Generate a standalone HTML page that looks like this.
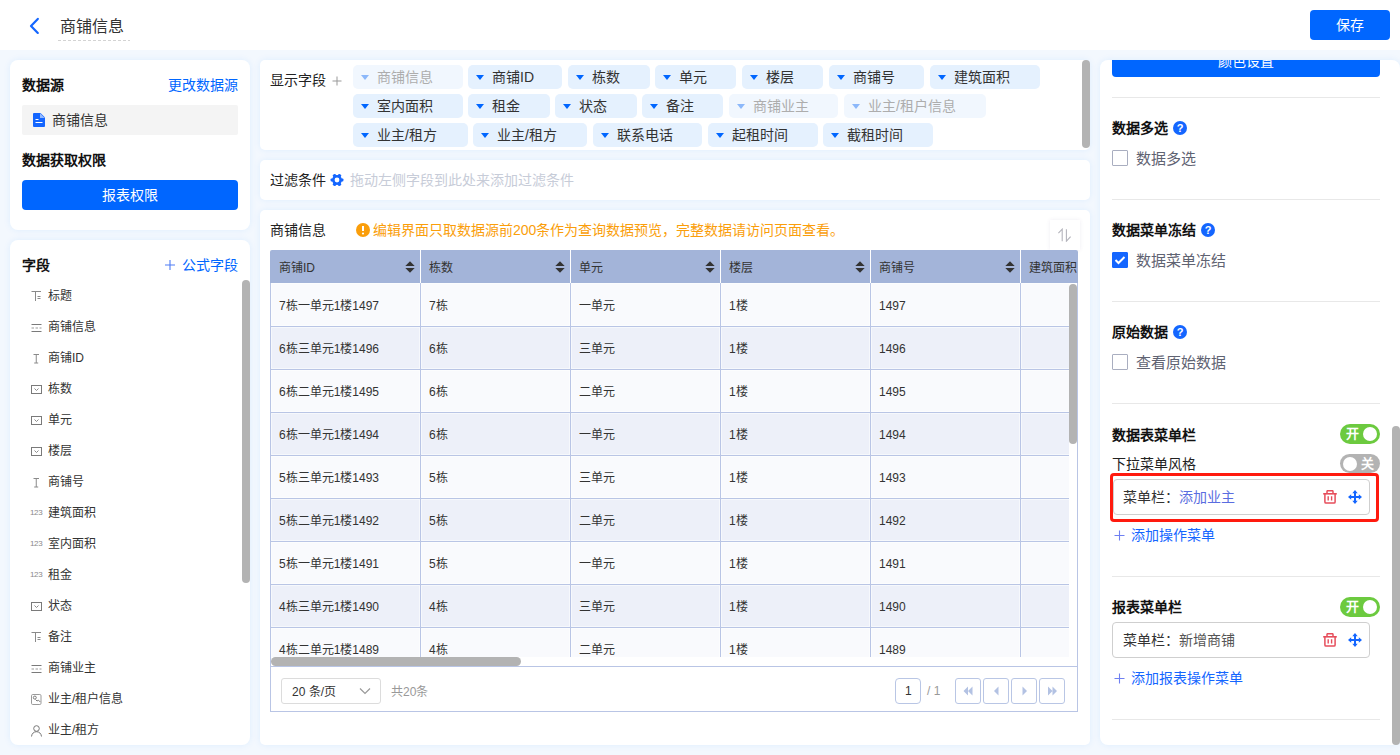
<!DOCTYPE html>
<html lang="zh-CN"><head><meta charset="utf-8"><title>商铺信息</title>
<style>
*{box-sizing:border-box;margin:0;padding:0}
html,body{width:1400px;height:755px;overflow:hidden}
body{position:relative;background:#f3f8fe;font-family:"Liberation Sans",sans-serif;color:#333;font-size:14px;line-height:1}
.a{position:absolute}
.hdr{left:0;top:0;width:1400px;height:50px;background:#fff}
.panel{background:#fff;box-shadow:0 0 7px rgba(0,130,250,0.09)}
.bold{font-weight:bold;color:#111}
.blue{color:#0066ff}
.txt{white-space:nowrap}
.tag{height:24px;border-radius:5px;background:#e5f1fe;color:#333;font-size:14px;line-height:24px;white-space:nowrap}
.tag.dis{background:#f1f7fe;color:#adadad}
.tag i{position:absolute;left:8px;top:9.5px;width:0;height:0;border-left:4px solid transparent;border-right:4px solid transparent;border-top:5px solid #0066ff}
.tag.dis i{border-top-color:#8cb8fa}
.tag span{position:absolute;left:24px;top:0}
.fld{left:30px;width:200px;height:14px;font-size:12px;color:#333;white-space:nowrap}
.fld svg{position:absolute;left:0;top:0}
.fld span{position:absolute;left:18px;top:0px}
.th{top:0;height:33px;color:#333;font-size:12px}
.th span{position:absolute;left:9px;top:12px}
.sort{position:absolute;left:135px;top:10.5px;width:10px;height:12px}
.td{font-size:12px;color:#333;height:42px;box-shadow:inset 0 0 0 1px rgba(255,255,255,0.5)}
.td span{position:absolute;left:8px;top:16px;white-space:nowrap}
.div{height:1px;background:#e8e8e8;left:1112px;width:268px}
.cb{width:16px;height:16px;border:1px solid #a9aec0;border-radius:1px;background:#fff}
.q{width:14px;height:14px;border-radius:7px;background:#1466ff;color:#fff;font-size:11px;font-weight:bold;text-align:center;line-height:14px}
.tog{width:40px;height:20px;border-radius:10px;color:#fff;font-size:13px;font-weight:bold}
.card{border:1px solid #cfcfcf;border-radius:4px;background:#fff}
.pbtn{width:26px;height:26px;border:1px solid #b9c6e5;border-radius:3px;background:#fff}
</style></head><body>
<div class="a hdr"></div>
<svg class="a" style="left:27px;top:16px" width="14" height="19" viewBox="0 0 14 19"><path d="M10.8 2.9L4 9.9L10.8 16.9" stroke="#1466ff" stroke-width="2.2" fill="none" stroke-linecap="round" stroke-linejoin="round"/></svg>
<div class="a txt" style="left:60px;top:19px;font-size:16px;color:#333">商铺信息</div>
<div class="a" style="left:58px;top:40px;width:72px;height:1px;background:repeating-linear-gradient(90deg,#d3d3d3 0 3px,transparent 3px 5px)"></div>
<div class="a" style="left:1310px;top:10px;width:80px;height:30px;border-radius:4px;background:#0066ff;color:#fff;font-size:14px;text-align:center;line-height:30px">保存</div>

<div class="a panel" style="left:10px;top:60px;width:240px;height:170px;border-radius:8px"></div>
<div class="a txt bold" style="left:22px;top:78px">数据源</div>
<div class="a txt blue" style="left:168px;top:78px">更改数据源</div>
<div class="a" style="left:22px;top:105px;width:216px;height:30px;background:#f4f4f4;border-radius:2px"></div>
<svg class="a" style="left:33px;top:113px" width="12" height="14" viewBox="0 0 12 14"><path d="M0 1a1 1 0 0 1 1-1h6.5l4.5 4.5v8.5a1 1 0 0 1-1 1H1a1 1 0 0 1-1-1z" fill="#1466ff"/><path d="M7 0.3v4.7h4.7z" fill="#fff" opacity="0.55"/><path d="M2.5 6.5h3M2.5 9.5h7" stroke="#fff" stroke-width="1.2"/></svg>
<div class="a txt" style="left:52px;top:113px;color:#333">商铺信息</div>
<div class="a txt bold" style="left:22px;top:153px">数据获取权限</div>
<div class="a" style="left:22px;top:180px;width:216px;height:30px;border-radius:4px;background:#0066ff;color:#fff;text-align:center;line-height:30px">报表权限</div>

<div class="a panel" style="left:10px;top:240px;width:240px;height:505px;border-radius:8px"></div>
<div class="a txt bold" style="left:22px;top:258px">字段</div>
<svg class="a" style="left:164px;top:259px" width="12" height="12" viewBox="0 0 12 12"><path d="M6 1v10M1 6h10" stroke="#4f7cf5" stroke-width="1.1"/></svg>
<div class="a txt blue" style="left:182px;top:258px">公式字段</div>
<div class="a" style="left:242px;top:280px;width:8px;height:303px;border-radius:4px;background:#b3b3b3"></div>

<div class="a fld" style="top:290px"><svg width="14" height="14" viewBox="0 0 14 14"><path d="M1.5 1.5h9.5M5.5 1.5v9.5M7.5 6.5h3M7.5 8.5h3" stroke="#8a8a8a" stroke-width="1" fill="none"/></svg><span>标题</span></div>
<div class="a fld" style="top:321px"><svg width="14" height="14" viewBox="0 0 14 14"><path d="M1.5 3.5h10M1.5 10.5h10" stroke="#7a7a7a" stroke-width="1" fill="none"/><path d="M1.5 7h10" stroke="#9a9a9a" stroke-width="1" stroke-dasharray="2.5 1.5" fill="none"/></svg><span>商铺信息</span></div>
<div class="a fld" style="top:352px"><svg width="14" height="14" viewBox="0 0 14 14"><path d="M3.5 2.5h5.5M6.25 2.5v8.5M4.2 11h4" stroke="#8a8a8a" stroke-width="1" fill="none"/></svg><span>商铺ID</span></div>
<div class="a fld" style="top:383px"><svg width="14" height="14" viewBox="0 0 14 14"><rect x="1.5" y="2.5" width="10" height="8" stroke="#7a7a7a" stroke-width="1" fill="none"/><path d="M4.5 5.5l2 2 2-2" stroke="#8a8a8a" stroke-width="1" fill="none"/></svg><span>栋数</span></div>
<div class="a fld" style="top:414px"><svg width="14" height="14" viewBox="0 0 14 14"><rect x="1.5" y="2.5" width="10" height="8" stroke="#7a7a7a" stroke-width="1" fill="none"/><path d="M4.5 5.5l2 2 2-2" stroke="#8a8a8a" stroke-width="1" fill="none"/></svg><span>单元</span></div>
<div class="a fld" style="top:445px"><svg width="14" height="14" viewBox="0 0 14 14"><rect x="1.5" y="2.5" width="10" height="8" stroke="#7a7a7a" stroke-width="1" fill="none"/><path d="M4.5 5.5l2 2 2-2" stroke="#8a8a8a" stroke-width="1" fill="none"/></svg><span>楼层</span></div>
<div class="a fld" style="top:476px"><svg width="14" height="14" viewBox="0 0 14 14"><path d="M3.5 2.5h5.5M6.25 2.5v8.5M4.2 11h4" stroke="#8a8a8a" stroke-width="1" fill="none"/></svg><span>商铺号</span></div>
<div class="a fld" style="top:507px"><svg width="14" height="14" viewBox="0 0 14 14"><text x="0" y="7.6" font-size="8" font-family="Liberation Sans" fill="#8a8a8a" letter-spacing="-0.35">123</text></svg><span>建筑面积</span></div>
<div class="a fld" style="top:538px"><svg width="14" height="14" viewBox="0 0 14 14"><text x="0" y="7.6" font-size="8" font-family="Liberation Sans" fill="#8a8a8a" letter-spacing="-0.35">123</text></svg><span>室内面积</span></div>
<div class="a fld" style="top:569px"><svg width="14" height="14" viewBox="0 0 14 14"><text x="0" y="7.6" font-size="8" font-family="Liberation Sans" fill="#8a8a8a" letter-spacing="-0.35">123</text></svg><span>租金</span></div>
<div class="a fld" style="top:600px"><svg width="14" height="14" viewBox="0 0 14 14"><rect x="1.5" y="2.5" width="10" height="8" stroke="#7a7a7a" stroke-width="1" fill="none"/><path d="M4.5 5.5l2 2 2-2" stroke="#8a8a8a" stroke-width="1" fill="none"/></svg><span>状态</span></div>
<div class="a fld" style="top:631px"><svg width="14" height="14" viewBox="0 0 14 14"><path d="M1.5 1.5h9.5M5.5 1.5v9.5M7.5 6.5h3M7.5 8.5h3" stroke="#8a8a8a" stroke-width="1" fill="none"/></svg><span>备注</span></div>
<div class="a fld" style="top:662px"><svg width="14" height="14" viewBox="0 0 14 14"><path d="M1.5 3.5h10M1.5 10.5h10" stroke="#7a7a7a" stroke-width="1" fill="none"/><path d="M1.5 7h10" stroke="#9a9a9a" stroke-width="1" stroke-dasharray="2.5 1.5" fill="none"/></svg><span>商铺业主</span></div>
<div class="a fld" style="top:693px"><svg width="14" height="14" viewBox="0 0 14 14"><rect x="1.5" y="1.5" width="9.5" height="10" rx="1.2" stroke="#9a9a9a" stroke-width="1" fill="none"/><circle cx="4.8" cy="4.6" r="1.5" stroke="#7a7a7a" fill="none"/><path d="M5.5 6.5l1.5 1.5 1.5-0.8 1.8 1.8" stroke="#7a7a7a" fill="none"/></svg><span>业主/租户信息</span></div>
<div class="a fld" style="top:724px"><svg width="14" height="14" viewBox="0 0 14 14"><circle cx="6.5" cy="4.5" r="2.8" stroke="#777" stroke-width="1" fill="none"/><path d="M1.5 12.5c0.3-3 2.3-4.8 5-4.8s4.7 1.8 5 4.8" stroke="#777" stroke-width="1" fill="none"/></svg><span>业主/租方</span></div>
<div class="a panel" style="left:260px;top:60px;width:830px;height:90px;border-radius:5px"></div>
<div class="a txt" style="left:270px;top:73px;color:#222">显示字段</div>
<svg class="a" style="left:332px;top:76px" width="10" height="10" viewBox="0 0 10 10"><path d="M5 0.5v9M0.5 5h9" stroke="#999" stroke-width="1"/></svg>
<div class="a" style="left:1082px;top:60px;width:8px;height:88px;border-radius:4px;background:#b3b3b3"></div>

<div class="a tag dis" style="left:353px;top:65px;width:110px"><i></i><span>商铺信息</span></div>
<div class="a tag" style="left:468px;top:65px;width:94px"><i></i><span>商铺ID</span></div>
<div class="a tag" style="left:568px;top:65px;width:82px"><i></i><span>栋数</span></div>
<div class="a tag" style="left:655px;top:65px;width:81px"><i></i><span>单元</span></div>
<div class="a tag" style="left:742px;top:65px;width:81px"><i></i><span>楼层</span></div>
<div class="a tag" style="left:829px;top:65px;width:95px"><i></i><span>商铺号</span></div>
<div class="a tag" style="left:930px;top:65px;width:110px"><i></i><span>建筑面积</span></div>
<div class="a tag" style="left:353px;top:94px;width:110px"><i></i><span>室内面积</span></div>
<div class="a tag" style="left:468px;top:94px;width:82px"><i></i><span>租金</span></div>
<div class="a tag" style="left:555px;top:94px;width:82px"><i></i><span>状态</span></div>
<div class="a tag" style="left:642px;top:94px;width:81px"><i></i><span>备注</span></div>
<div class="a tag dis" style="left:729px;top:94px;width:109px"><i></i><span>商铺业主</span></div>
<div class="a tag dis" style="left:844px;top:94px;width:142px"><i></i><span>业主/租户信息</span></div>
<div class="a tag" style="left:353px;top:123px;width:115px"><i></i><span>业主/租方</span></div>
<div class="a tag" style="left:473px;top:123px;width:114px"><i></i><span>业主/租方</span></div>
<div class="a tag" style="left:593px;top:123px;width:109px"><i></i><span>联系电话</span></div>
<div class="a tag" style="left:708px;top:123px;width:110px"><i></i><span>起租时间</span></div>
<div class="a tag" style="left:823px;top:123px;width:110px"><i></i><span>截租时间</span></div>
<div class="a panel" style="left:260px;top:160px;width:830px;height:40px;border-radius:5px"></div>
<div class="a txt" style="left:270px;top:173px;color:#222">过滤条件</div>
<svg class="a" style="left:330px;top:173.3px" width="14" height="14" viewBox="0 0 14 14"><g fill="#1466ff"><circle cx="7" cy="7" r="4.9"/><rect x="0.6" y="5.4" width="12.8" height="3.2" rx="0.8"/><rect x="0.6" y="5.4" width="12.8" height="3.2" rx="0.8" transform="rotate(60 7 7)"/><rect x="0.6" y="5.4" width="12.8" height="3.2" rx="0.8" transform="rotate(120 7 7)"/></g><circle cx="7" cy="7" r="2.4" fill="#fff"/></svg>
<div class="a txt" style="left:350px;top:173px;color:#c7ccd8">拖动左侧字段到此处来添加过滤条件</div>

<div class="a panel" style="left:260px;top:210px;width:830px;height:535px;border-radius:5px"></div>
<div class="a txt" style="left:270px;top:223px;color:#222">商铺信息</div>
<svg class="a" style="left:356px;top:223px" width="14" height="14" viewBox="0 0 14 14"><circle cx="7" cy="7" r="7" fill="#fa9e0b"/><path d="M7 3v5" stroke="#fff" stroke-width="2"/><circle cx="7" cy="10.5" r="1.1" fill="#fff"/></svg>
<div class="a txt" style="left:373px;top:223px;color:#fa9e0b">编辑界面只取数据源前200条作为查询数据预览，完整数据请访问页面查看。</div>
<div class="a" style="left:1050px;top:220px;width:30px;height:30px;background:#fff;box-shadow:0 0 4px rgba(80,60,120,0.09)"></div>
<svg class="a" style="left:1058px;top:228px" width="14" height="14" viewBox="0 0 14 14"><path d="M4.2 13.2V1.2L0.4 5.2M8.4 1.2v12l4.2-4.6" stroke="#b4b4bc" stroke-width="1.1" fill="none"/></svg>

<div class="a" style="left:270px;top:250px;width:808px;height:33px;background:#a3b4d9;border-radius:2px 2px 0 0"></div>
<div class="a" style="left:270px;top:250px;width:808px;height:33px;overflow:hidden">
<div class="a th" style="left:0px;width:150px"><span>商铺ID</span><svg class="sort" viewBox="0 0 10 12"><path d="M0.3 5L5 0.3L9.7 5Z M0.3 7L5 11.7L9.7 7Z" fill="#333"/></svg></div>
<div class="a th" style="left:150px;width:150px"><span>栋数</span><svg class="sort" viewBox="0 0 10 12"><path d="M0.3 5L5 0.3L9.7 5Z M0.3 7L5 11.7L9.7 7Z" fill="#333"/></svg></div>
<div class="a" style="left:150px;top:0;width:1px;height:33px;background:#fff"></div>
<div class="a th" style="left:300px;width:150px"><span>单元</span><svg class="sort" viewBox="0 0 10 12"><path d="M0.3 5L5 0.3L9.7 5Z M0.3 7L5 11.7L9.7 7Z" fill="#333"/></svg></div>
<div class="a" style="left:300px;top:0;width:1px;height:33px;background:#fff"></div>
<div class="a th" style="left:450px;width:150px"><span>楼层</span><svg class="sort" viewBox="0 0 10 12"><path d="M0.3 5L5 0.3L9.7 5Z M0.3 7L5 11.7L9.7 7Z" fill="#333"/></svg></div>
<div class="a" style="left:450px;top:0;width:1px;height:33px;background:#fff"></div>
<div class="a th" style="left:600px;width:150px"><span>商铺号</span><svg class="sort" viewBox="0 0 10 12"><path d="M0.3 5L5 0.3L9.7 5Z M0.3 7L5 11.7L9.7 7Z" fill="#333"/></svg></div>
<div class="a" style="left:600px;top:0;width:1px;height:33px;background:#fff"></div>
<div class="a th" style="left:750px;width:150px"><span>建筑面积</span></div>
<div class="a" style="left:750px;top:0;width:1px;height:33px;background:#fff"></div>
</div>
<div class="a" style="left:271px;top:283px;width:798px;height:374px;overflow:hidden;background:#fff">
<div class="a td" style="left:0px;top:0px;width:149px;height:43px;background:#f9fafd"><span style="top:17px">7栋一单元1楼1497</span></div>
<div class="a td" style="left:150px;top:0px;width:149px;height:43px;background:#f9fafd"><span style="top:17px">7栋</span></div>
<div class="a td" style="left:300px;top:0px;width:149px;height:43px;background:#f9fafd"><span style="top:17px">一单元</span></div>
<div class="a td" style="left:450px;top:0px;width:149px;height:43px;background:#f9fafd"><span style="top:17px">1楼</span></div>
<div class="a td" style="left:600px;top:0px;width:149px;height:43px;background:#f9fafd"><span style="top:17px">1497</span></div>
<div class="a td" style="left:750px;top:0px;width:149px;height:43px;background:#f9fafd"><span style="top:17px"></span></div>
<div class="a" style="left:0;top:43px;width:798px;height:1px;background:#b9c5e5"></div>
<div class="a td" style="left:0px;top:44px;width:149px;height:42px;background:#edf0f9"><span style="top:16px">6栋三单元1楼1496</span></div>
<div class="a td" style="left:150px;top:44px;width:149px;height:42px;background:#edf0f9"><span style="top:16px">6栋</span></div>
<div class="a td" style="left:300px;top:44px;width:149px;height:42px;background:#edf0f9"><span style="top:16px">三单元</span></div>
<div class="a td" style="left:450px;top:44px;width:149px;height:42px;background:#edf0f9"><span style="top:16px">1楼</span></div>
<div class="a td" style="left:600px;top:44px;width:149px;height:42px;background:#edf0f9"><span style="top:16px">1496</span></div>
<div class="a td" style="left:750px;top:44px;width:149px;height:42px;background:#edf0f9"><span style="top:16px"></span></div>
<div class="a" style="left:0;top:86px;width:798px;height:1px;background:#b9c5e5"></div>
<div class="a td" style="left:0px;top:87px;width:149px;height:42px;background:#f9fafd"><span style="top:16px">6栋二单元1楼1495</span></div>
<div class="a td" style="left:150px;top:87px;width:149px;height:42px;background:#f9fafd"><span style="top:16px">6栋</span></div>
<div class="a td" style="left:300px;top:87px;width:149px;height:42px;background:#f9fafd"><span style="top:16px">二单元</span></div>
<div class="a td" style="left:450px;top:87px;width:149px;height:42px;background:#f9fafd"><span style="top:16px">1楼</span></div>
<div class="a td" style="left:600px;top:87px;width:149px;height:42px;background:#f9fafd"><span style="top:16px">1495</span></div>
<div class="a td" style="left:750px;top:87px;width:149px;height:42px;background:#f9fafd"><span style="top:16px"></span></div>
<div class="a" style="left:0;top:129px;width:798px;height:1px;background:#b9c5e5"></div>
<div class="a td" style="left:0px;top:130px;width:149px;height:42px;background:#edf0f9"><span style="top:16px">6栋一单元1楼1494</span></div>
<div class="a td" style="left:150px;top:130px;width:149px;height:42px;background:#edf0f9"><span style="top:16px">6栋</span></div>
<div class="a td" style="left:300px;top:130px;width:149px;height:42px;background:#edf0f9"><span style="top:16px">一单元</span></div>
<div class="a td" style="left:450px;top:130px;width:149px;height:42px;background:#edf0f9"><span style="top:16px">1楼</span></div>
<div class="a td" style="left:600px;top:130px;width:149px;height:42px;background:#edf0f9"><span style="top:16px">1494</span></div>
<div class="a td" style="left:750px;top:130px;width:149px;height:42px;background:#edf0f9"><span style="top:16px"></span></div>
<div class="a" style="left:0;top:172px;width:798px;height:1px;background:#b9c5e5"></div>
<div class="a td" style="left:0px;top:173px;width:149px;height:42px;background:#f9fafd"><span style="top:16px">5栋三单元1楼1493</span></div>
<div class="a td" style="left:150px;top:173px;width:149px;height:42px;background:#f9fafd"><span style="top:16px">5栋</span></div>
<div class="a td" style="left:300px;top:173px;width:149px;height:42px;background:#f9fafd"><span style="top:16px">三单元</span></div>
<div class="a td" style="left:450px;top:173px;width:149px;height:42px;background:#f9fafd"><span style="top:16px">1楼</span></div>
<div class="a td" style="left:600px;top:173px;width:149px;height:42px;background:#f9fafd"><span style="top:16px">1493</span></div>
<div class="a td" style="left:750px;top:173px;width:149px;height:42px;background:#f9fafd"><span style="top:16px"></span></div>
<div class="a" style="left:0;top:215px;width:798px;height:1px;background:#b9c5e5"></div>
<div class="a td" style="left:0px;top:216px;width:149px;height:42px;background:#edf0f9"><span style="top:16px">5栋二单元1楼1492</span></div>
<div class="a td" style="left:150px;top:216px;width:149px;height:42px;background:#edf0f9"><span style="top:16px">5栋</span></div>
<div class="a td" style="left:300px;top:216px;width:149px;height:42px;background:#edf0f9"><span style="top:16px">二单元</span></div>
<div class="a td" style="left:450px;top:216px;width:149px;height:42px;background:#edf0f9"><span style="top:16px">1楼</span></div>
<div class="a td" style="left:600px;top:216px;width:149px;height:42px;background:#edf0f9"><span style="top:16px">1492</span></div>
<div class="a td" style="left:750px;top:216px;width:149px;height:42px;background:#edf0f9"><span style="top:16px"></span></div>
<div class="a" style="left:0;top:258px;width:798px;height:1px;background:#b9c5e5"></div>
<div class="a td" style="left:0px;top:259px;width:149px;height:42px;background:#f9fafd"><span style="top:16px">5栋一单元1楼1491</span></div>
<div class="a td" style="left:150px;top:259px;width:149px;height:42px;background:#f9fafd"><span style="top:16px">5栋</span></div>
<div class="a td" style="left:300px;top:259px;width:149px;height:42px;background:#f9fafd"><span style="top:16px">一单元</span></div>
<div class="a td" style="left:450px;top:259px;width:149px;height:42px;background:#f9fafd"><span style="top:16px">1楼</span></div>
<div class="a td" style="left:600px;top:259px;width:149px;height:42px;background:#f9fafd"><span style="top:16px">1491</span></div>
<div class="a td" style="left:750px;top:259px;width:149px;height:42px;background:#f9fafd"><span style="top:16px"></span></div>
<div class="a" style="left:0;top:301px;width:798px;height:1px;background:#b9c5e5"></div>
<div class="a td" style="left:0px;top:302px;width:149px;height:42px;background:#edf0f9"><span style="top:16px">4栋三单元1楼1490</span></div>
<div class="a td" style="left:150px;top:302px;width:149px;height:42px;background:#edf0f9"><span style="top:16px">4栋</span></div>
<div class="a td" style="left:300px;top:302px;width:149px;height:42px;background:#edf0f9"><span style="top:16px">三单元</span></div>
<div class="a td" style="left:450px;top:302px;width:149px;height:42px;background:#edf0f9"><span style="top:16px">1楼</span></div>
<div class="a td" style="left:600px;top:302px;width:149px;height:42px;background:#edf0f9"><span style="top:16px">1490</span></div>
<div class="a td" style="left:750px;top:302px;width:149px;height:42px;background:#edf0f9"><span style="top:16px"></span></div>
<div class="a" style="left:0;top:344px;width:798px;height:1px;background:#b9c5e5"></div>
<div class="a td" style="left:0px;top:345px;width:149px;height:42px;background:#f9fafd"><span style="top:16px">4栋二单元1楼1489</span></div>
<div class="a td" style="left:150px;top:345px;width:149px;height:42px;background:#f9fafd"><span style="top:16px">4栋</span></div>
<div class="a td" style="left:300px;top:345px;width:149px;height:42px;background:#f9fafd"><span style="top:16px">二单元</span></div>
<div class="a td" style="left:450px;top:345px;width:149px;height:42px;background:#f9fafd"><span style="top:16px">1楼</span></div>
<div class="a td" style="left:600px;top:345px;width:149px;height:42px;background:#f9fafd"><span style="top:16px">1489</span></div>
<div class="a td" style="left:750px;top:345px;width:149px;height:42px;background:#f9fafd"><span style="top:16px"></span></div>
<div class="a" style="left:0;top:387px;width:798px;height:1px;background:#b9c5e5"></div>
<div class="a" style="left:149px;top:0;width:1px;height:374px;background:#b9c5e5"></div>
<div class="a" style="left:299px;top:0;width:1px;height:374px;background:#b9c5e5"></div>
<div class="a" style="left:449px;top:0;width:1px;height:374px;background:#b9c5e5"></div>
<div class="a" style="left:599px;top:0;width:1px;height:374px;background:#b9c5e5"></div>
<div class="a" style="left:749px;top:0;width:1px;height:374px;background:#b9c5e5"></div>
</div>
<div class="a" style="left:270px;top:283px;width:1px;height:429px;background:#b9c5e5"></div>
<div class="a" style="left:1077px;top:283px;width:1px;height:429px;background:#b9c5e5"></div>
<div class="a" style="left:270px;top:711px;width:808px;height:1px;background:#b9c5e5"></div>
<div class="a" style="left:270px;top:666px;width:808px;height:1px;background:#b9c5e5"></div>
<div class="a" style="left:1069px;top:284px;width:8px;height:160px;border-radius:4px;background:#b3b3b3"></div>
<div class="a" style="left:271px;top:657px;width:250px;height:9px;border-radius:4.5px;background:#b3b3b3"></div>
<div class="a" style="left:281px;top:678px;width:100px;height:26px;border:1px solid #dcdcdc;border-radius:3px"></div>
<div class="a txt" style="left:292px;top:686px;font-size:12px;color:#333">20 条/页</div>
<svg class="a" style="left:359px;top:687px" width="12" height="8" viewBox="0 0 12 8"><path d="M1 1.5L6 6.5L11 1.5" stroke="#999" stroke-width="1.2" fill="none"/></svg>
<div class="a txt" style="left:391px;top:686px;font-size:12px;color:#999">共20条</div>
<div class="a pbtn" style="left:895px;top:678px;border-radius:4px"></div>
<div class="a txt" style="left:905px;top:685px;font-size:12px;color:#333">1</div>
<div class="a txt" style="left:927px;top:685px;font-size:12px;color:#999">/ 1</div>
<div class="a pbtn" style="left:955px;top:678px"><svg class="a" style="left:6px;top:7px" width="12" height="10" viewBox="0 0 12 10"><path d="M6 0.5L1.5 5L6 9.5Z M10.5 0.5L6 5L10.5 9.5Z" fill="#b3c2e3"/></svg></div>
<div class="a pbtn" style="left:983px;top:678px"><svg class="a" style="left:9px;top:7px" width="6" height="10" viewBox="0 0 6 10"><path d="M5.5 0.5L1 5L5.5 9.5Z" fill="#b3c2e3"/></svg></div>
<div class="a pbtn" style="left:1011px;top:678px"><svg class="a" style="left:10px;top:7px" width="6" height="10" viewBox="0 0 6 10"><path d="M0.5 0.5L5 5L0.5 9.5Z" fill="#b3c2e3"/></svg></div>
<div class="a pbtn" style="left:1039px;top:678px"><svg class="a" style="left:7px;top:7px" width="12" height="10" viewBox="0 0 12 10"><path d="M1 0.5L5.5 5L1 9.5Z M5.5 0.5L10 5L5.5 9.5Z" fill="#b3c2e3"/></svg></div>

<div class="a panel" style="left:1100px;top:60px;width:300px;height:685px;border-radius:8px;overflow:hidden">
<div class="a" style="left:12px;top:-20px;width:268px;height:37px;border-radius:4px;background:#0066ff;color:#fff;text-align:center;line-height:42px">颜色设置</div>
</div>
<div class="a div" style="top:97px"></div>
<div class="a div" style="top:199px"></div>
<div class="a div" style="top:301px"></div>
<div class="a div" style="top:403px"></div>
<div class="a div" style="top:576px"></div>
<div class="a div" style="top:719px"></div>
<div class="a" style="left:1392px;top:426px;width:8px;height:319px;border-radius:4px;background:#b3b3b3"></div>

<div class="a txt bold" style="left:1112px;top:121px">数据多选</div>
<div class="a q" style="left:1173px;top:121px">?</div>
<div class="a cb" style="left:1112px;top:150px"></div>
<div class="a txt" style="left:1136px;top:151px;color:#5f6372;font-size:15px">数据多选</div>
<div class="a txt bold" style="left:1112px;top:223px">数据菜单冻结</div>
<div class="a q" style="left:1201px;top:223px">?</div>
<div class="a cb" style="left:1112px;top:252px;background:#1466ff;border-color:#1466ff"><svg class="a" style="left:1px;top:2px" width="12" height="10" viewBox="0 0 12 10"><path d="M1.5 5L4.5 8L10.5 2" stroke="#fff" stroke-width="2" fill="none"/></svg></div>
<div class="a txt" style="left:1136px;top:253px;color:#5f6372;font-size:15px">数据菜单冻结</div>
<div class="a txt bold" style="left:1112px;top:325px">原始数据</div>
<div class="a q" style="left:1173px;top:325px">?</div>
<div class="a cb" style="left:1112px;top:354px"></div>
<div class="a txt" style="left:1136px;top:355px;color:#5f6372;font-size:15px">查看原始数据</div>
<div class="a txt bold" style="left:1112px;top:428px">数据表菜单栏</div>
<div class="a tog" style="left:1340px;top:424px;background:#6cca3f"><span class="a" style="left:6px;top:3px">开</span><div class="a" style="left:23px;top:3px;width:14px;height:14px;border-radius:7px;background:#fff"></div></div>
<div class="a txt" style="left:1112px;top:457px;color:#222">下拉菜单风格</div>
<div class="a tog" style="left:1340px;top:454px;height:19px;background:#b3b3b3"><div class="a" style="left:3px;top:2.5px;width:14px;height:14px;border-radius:7px;background:#fff"></div><span class="a" style="left:21px;top:3px">关</span></div>
<div class="a" style="left:1110px;top:473px;width:269px;height:49px;border:3px solid #ff1a0e;border-radius:4px"></div>
<div class="a card" style="left:1113px;top:479px;width:257px;height:36px"></div>
<div class="a txt" style="left:1123px;top:490px;color:#333">菜单栏：<span style="color:#5a6de0">添加业主</span></div>
<div class="a" style="left:1323px;top:490px"><svg width="14" height="14" viewBox="0 0 14 14"><g stroke="#e64d5b" fill="none"><path d="M4 3.2V1.4a.7.7 0 0 1 .7-.7h4.6a.7.7 0 0 1 .7.7v1.8" stroke-width="1.5"/><path d="M0.2 3.8h13.6" stroke-width="1.6"/><path d="M1.9 3.8v8.2a1.1 1.1 0 0 0 1.1 1.1h8a1.1 1.1 0 0 0 1.1-1.1V3.8" stroke-width="1.5"/><path d="M5.2 6.2v4.3M8.6 6.2v4.3" stroke-width="1.4"/></g></svg></div>
<div class="a" style="left:1348px;top:490px"><svg width="14" height="14" viewBox="0 0 14 14"><path d="M7 0L4.3 3.2h5.4zM7 14L4.3 10.8h5.4zM0 7L3.2 4.3v5.4zM14 7L10.8 4.3v5.4z" fill="#1466ff"/><path d="M7 2.5v9M2.5 7h9" stroke="#1466ff" stroke-width="2"/></svg></div>
<svg class="a" style="left:1114px;top:530px" width="11" height="11" viewBox="0 0 11 11"><path d="M5.5 0.5v10M0.5 5.5h10" stroke="#6f80f2" stroke-width="1.1"/></svg>
<div class="a txt" style="left:1131px;top:528px;color:#1466ff">添加操作菜单</div>
<div class="a txt bold" style="left:1112px;top:600px">报表菜单栏</div>
<div class="a tog" style="left:1340px;top:597px;background:#6cca3f"><span class="a" style="left:6px;top:3px">开</span><div class="a" style="left:23px;top:3px;width:14px;height:14px;border-radius:7px;background:#fff"></div></div>
<div class="a card" style="left:1112px;top:622px;width:258px;height:36px"></div>
<div class="a txt" style="left:1123px;top:633px;color:#333">菜单栏：<span style="color:#555">新增商铺</span></div>
<div class="a" style="left:1323px;top:633px"><svg width="14" height="14" viewBox="0 0 14 14"><g stroke="#e64d5b" fill="none"><path d="M4 3.2V1.4a.7.7 0 0 1 .7-.7h4.6a.7.7 0 0 1 .7.7v1.8" stroke-width="1.5"/><path d="M0.2 3.8h13.6" stroke-width="1.6"/><path d="M1.9 3.8v8.2a1.1 1.1 0 0 0 1.1 1.1h8a1.1 1.1 0 0 0 1.1-1.1V3.8" stroke-width="1.5"/><path d="M5.2 6.2v4.3M8.6 6.2v4.3" stroke-width="1.4"/></g></svg></div>
<div class="a" style="left:1348px;top:633px"><svg width="14" height="14" viewBox="0 0 14 14"><path d="M7 0L4.3 3.2h5.4zM7 14L4.3 10.8h5.4zM0 7L3.2 4.3v5.4zM14 7L10.8 4.3v5.4z" fill="#1466ff"/><path d="M7 2.5v9M2.5 7h9" stroke="#1466ff" stroke-width="2"/></svg></div>
<svg class="a" style="left:1114px;top:673px" width="11" height="11" viewBox="0 0 11 11"><path d="M5.5 0.5v10M0.5 5.5h10" stroke="#6f80f2" stroke-width="1.1"/></svg>
<div class="a txt" style="left:1131px;top:671px;color:#1466ff">添加报表操作菜单</div>

</body></html>
